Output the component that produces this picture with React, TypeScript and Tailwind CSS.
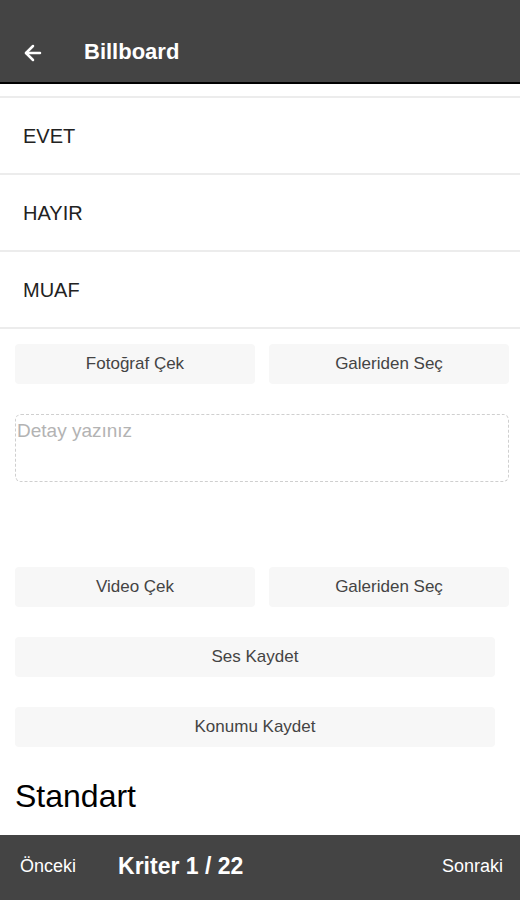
import { ArrowLeft } from "lucide-react";

const OPTIONS = ["EVET", "HAYIR", "MUAF"];

function GrayButton({ label, className = "" }: { label: string; className?: string }) {
  return (
    <button
      className={`flex h-[40px] items-center justify-center rounded-[4px] bg-[#f7f7f7] text-[17px] text-[#444] ${className}`}
    >
      {label}
    </button>
  );
}

export default function App() {
  return (
    <div
      className="flex h-[900px] w-[520px] flex-col overflow-hidden bg-white"
      style={{ fontFamily: '"Liberation Sans", Arial, sans-serif' }}
    >
      {/* Header */}
      <header className="flex h-[84px] shrink-0 items-end border-b-2 border-black bg-[#444] pb-[14px]">
        <ArrowLeft className="ml-[21px] mb-[3px] h-[24px] w-[24px] text-white" strokeWidth={2.5} />
        <h1 className="ml-[39px] text-[22px] font-bold text-white">Billboard</h1>
      </header>

      {/* Content */}
      <main className="flex-1 overflow-hidden">
        <div className="h-[14px] border-b-2 border-[#ececec]" />
        {OPTIONS.map((opt) => (
          <div
            key={opt}
            className="flex h-[77px] items-center border-b-2 border-[#ececec] pl-[23px] text-[20px] text-[#222]"
          >
            {opt}
          </div>
        ))}

        <div className="flex flex-col pt-[15px] pl-[15px] pr-[11px]">
          <div className="flex gap-[14px]">
            <GrayButton label="Fotoğraf Çek" className="flex-1" />
            <GrayButton label="Galeriden Seç" className="flex-1" />
          </div>

          <div className="mt-[30px] h-[68px] rounded-[6px] border border-dashed border-[#cfcfcf]">
            <textarea
              placeholder="Detay yazınız"
              className="h-full w-full resize-none bg-transparent pt-[2px] pl-[1px] text-[19px] text-[#333] outline-none placeholder:text-[#b3b3b3]"
            />
          </div>

          <div className="mt-[85px] flex gap-[14px]">
            <GrayButton label="Video Çek" className="flex-1" />
            <GrayButton label="Galeriden Seç" className="flex-1" />
          </div>

          <GrayButton label="Ses Kaydet" className="mt-[30px] mr-[14px]" />
          <GrayButton label="Konumu Kaydet" className="mt-[30px] mr-[14px]" />

          <h2 className="mt-[29px] text-[32px] leading-[40px] text-black">Standart</h2>
        </div>
      </main>

      {/* Footer */}
      <footer className="flex h-[65px] shrink-0 items-center bg-[#444] px-[20px] pb-[2px] text-white">
        <span className="text-[18px]">Önceki</span>
        <span className="ml-[42px] text-[23px] font-bold">Kriter 1 / 22</span>
        <span className="ml-auto mr-[-3px] text-[18px]">Sonraki</span>
      </footer>
    </div>
  );
}
